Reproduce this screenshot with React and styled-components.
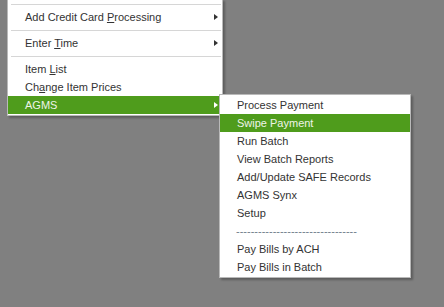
import React from "react";
import styled, { createGlobalStyle } from "styled-components";

const Global = createGlobalStyle`
  html, body { margin: 0; padding: 0; }
  body {
    background: #808080;
    font-family: "Liberation Sans", Arial, sans-serif;
    font-size: 11px;
    color: #333333;
    width: 444px;
    height: 307px;
    overflow: hidden;
  }
`;

const Desktop = styled.div`
  position: relative;
  width: 444px;
  height: 307px;
  background: #808080;
  overflow: hidden;
`;

const Menu = styled.div`
  position: absolute;
  left: ${(p) => p.$left}px;
  top: ${(p) => p.$top}px;
  width: ${(p) => p.$width}px;
  box-sizing: border-box;
  background: #ffffff;
  border: 1px solid #b9b9b9;
  padding: ${(p) => p.$padTop}px 0 1px 0;
  box-shadow: 2px 2px 2px rgba(0, 0, 0, 0.28);
  display: flex;
  flex-direction: column;
`;

const Row = styled.div`
  position: relative;
  height: 18px;
  display: flex;
  align-items: center;
  padding-left: 17px;
  background: ${(p) => (p.$active ? "#4f9c1c" : "transparent")};
  color: ${(p) => (p.$active ? "#eef4e8" : "#333333")};
  white-space: nowrap;
  line-height: 18px;
`;

const Label = styled.span`
  flex: 1;
`;

const Arrow = styled.span`
  width: 0;
  height: 0;
  margin-right: 4px;
  border-top: 3.5px solid transparent;
  border-bottom: 3.5px solid transparent;
  border-left: 4px solid ${(p) => (p.$active ? "#ffffff" : "#333333")};
`;

const Separator = styled.div`
  height: 8px;
  display: flex;
  align-items: center;
  padding: 0 1px 0 3px;

  &::after {
    content: "";
    flex: 1;
    height: 1px;
    background: #d6d6d6;
  }
`;

const Dashes = styled.div`
  height: 18px;
  line-height: 18px;
  padding-left: 16px;
  color: #6f7c8a;
  white-space: nowrap;
`;

function Item({ children, active, sub }) {
  return (
    <Row $active={active}>
      <Label>{children}</Label>
      {sub && <Arrow $active={active} />}
    </Row>
  );
}

export default function App() {
  return (
    <>
      <Global />
      <Desktop>
        <Menu $left={7} $top={-1} $width={216} $padTop={0}>
          <Separator />
          <Item sub>
            Add Credit Card <u>P</u>rocessing
          </Item>
          <Separator />
          <Item sub>
            Enter <u>T</u>ime
          </Item>
          <Separator />
          <Item>
            Item <u>L</u>ist
          </Item>
          <Item>
            Ch<u>a</u>nge Item Prices
          </Item>
          <Item sub active>
            AGMS
          </Item>
        </Menu>
        <Menu $left={219} $top={94} $width={192} $padTop={1}>
          <Item>Process Payment</Item>
          <Item active>Swipe Payment</Item>
          <Item>Run Batch</Item>
          <Item>View Batch Reports</Item>
          <Item>Add/Update SAFE Records</Item>
          <Item>AGMS Synx</Item>
          <Item>Setup</Item>
          <Dashes>{"-".repeat(33)}</Dashes>
          <Item>Pay Bills by ACH</Item>
          <Item>Pay Bills in Batch</Item>
        </Menu>
      </Desktop>
    </>
  );
}
